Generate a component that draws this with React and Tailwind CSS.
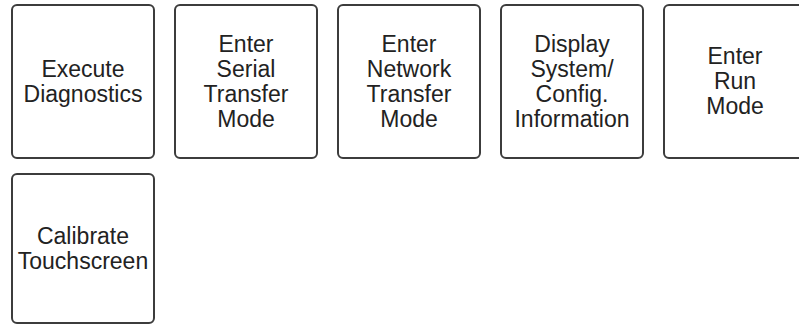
import React from 'react';

const rowOne = [
  ['Execute', 'Diagnostics'],
  ['Enter', 'Serial', 'Transfer', 'Mode'],
  ['Enter', 'Network', 'Transfer', 'Mode'],
  ['Display', 'System/', 'Config.', 'Information'],
  ['Enter', 'Run', 'Mode'],
];

const rowTwo = [['Calibrate', 'Touchscreen']];

function MenuButton({ lines, tall }) {
  return (
    <button
      className={`w-[144px] shrink-0 ${tall ? 'h-[155px]' : 'h-[151px]'} flex flex-col items-center justify-center border-2 border-[#3c3c3c] rounded-[6px] bg-white text-[#222] text-[23px] leading-[25px] overflow-visible whitespace-nowrap`}
    >
      {lines.map((l, i) => (
        <span key={i}>{l}</span>
      ))}
    </button>
  );
}

export default function App() {
  return (
    <div
      className="w-[799px] h-[326px] overflow-hidden bg-white pt-[4px] pl-[11px] flex flex-col gap-[14px]"
      style={{ fontFamily: '"Liberation Sans", Arial, sans-serif' }}
    >
      <div className="flex gap-[19px]">
        {rowOne.map((lines, i) => (
          <MenuButton key={i} lines={lines} tall />
        ))}
      </div>
      <div className="flex gap-[19px]">
        {rowTwo.map((lines, i) => (
          <MenuButton key={i} lines={lines} />
        ))}
      </div>
    </div>
  );
}
